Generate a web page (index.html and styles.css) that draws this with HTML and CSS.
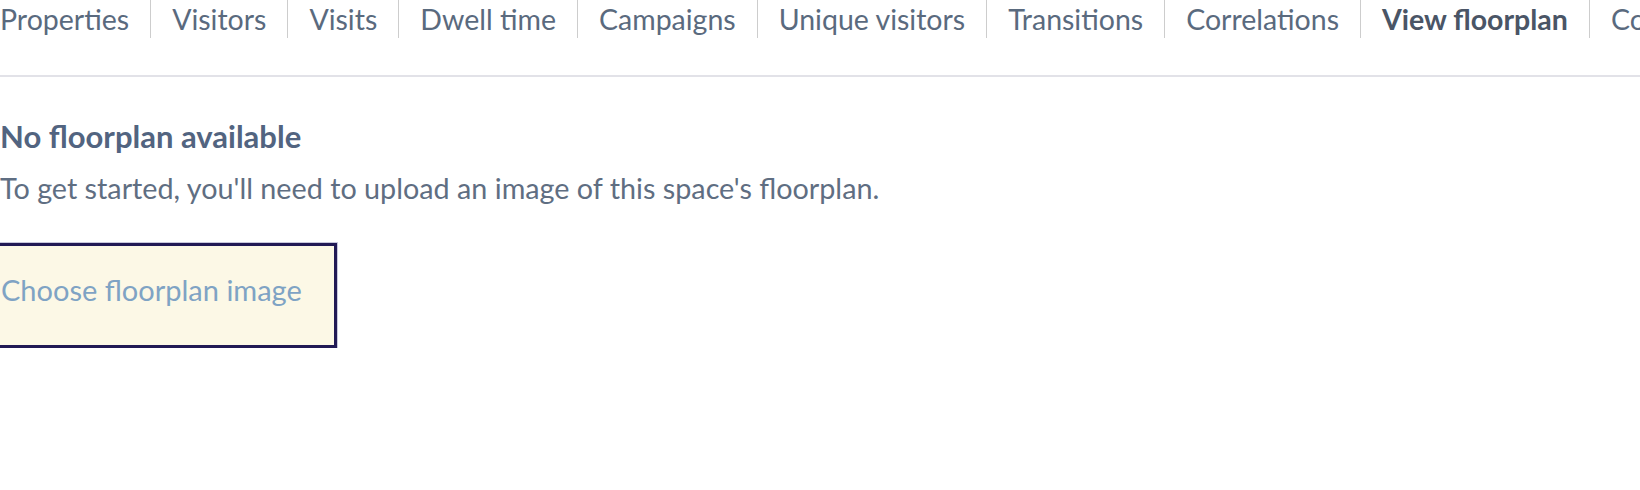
FILE: index.html
```html
<!DOCTYPE html>
<html lang="en">

<head>
    <meta charset="UTF-8">
    <title>View floorplan</title>
    <link rel="stylesheet" href="styles.css">
</head>

<body>

    <!-- Space Tabs -->
    <nav class="space-tabs">
        <a href="#" class="tab">Properties</a>
        <a href="#" class="tab">Visitors</a>
        <a href="#" class="tab">Visits</a>
        <a href="#" class="tab">Dwell time</a>
        <a href="#" class="tab">Campaigns</a>
        <a href="#" class="tab">Unique visitors</a>
        <a href="#" class="tab">Transitions</a>
        <a href="#" class="tab">Correlations</a>
        <a href="#" class="tab active">View floorplan</a>
        <a href="#" class="tab">Configuration</a>
    </nav>

    <!-- Empty Floorplan -->
    <section class="floorplan-empty">
        <h2>No floorplan available</h2>
        <p>To get started, you'll need to upload an image of this space's floorplan.</p>
        <button class="upload-btn">Choose floorplan image</button>
    </section>

</body>

</html>
```

FILE: styles.css
```css
/* Global Styles */
body {
    font-family: 'Lato', sans-serif;
    background: #fff;
    color: #5a6a7e;
    margin: 0;
    overflow: hidden;
}

/* Space Tabs */
.space-tabs {
    display: flex;
    white-space: nowrap;
    border-bottom: 2px solid #e2e2e8;
    padding-bottom: 37px;
}

.tab {
    color: #5a6a7e;
    text-decoration: none;
    font-size: 28.5px;
    line-height: 38px;
    padding: 0 21px;
    border-left: 1px solid #cdcdcd;
}

.tab:first-child {
    padding-left: 0;
    border-left: none;
}

.tab.active {
    font-weight: 700;
    color: #4a5566;
}

/* Empty State */
.floorplan-empty {
    padding-top: 41px;
}

.floorplan-empty h2 {
    margin: 0;
    font-size: 31px;
    line-height: 36px;
    font-weight: 700;
    color: #526480;
}

.floorplan-empty p {
    margin: 16px 0 0;
    font-size: 28.75px;
    line-height: 36px;
    color: #5f6e82;
}

.upload-btn {
    margin: 37px 0 0 -22px;
    padding: 0 32px 12px 20px;
    height: 105px;
    font-family: inherit;
    font-size: 29px;
    color: #7fa3c4;
    background: #fcf8e6;
    border: 3px solid #221a55;
    box-shadow: 0 0 0 1px #c8c8dc;
    cursor: pointer;
}
```
